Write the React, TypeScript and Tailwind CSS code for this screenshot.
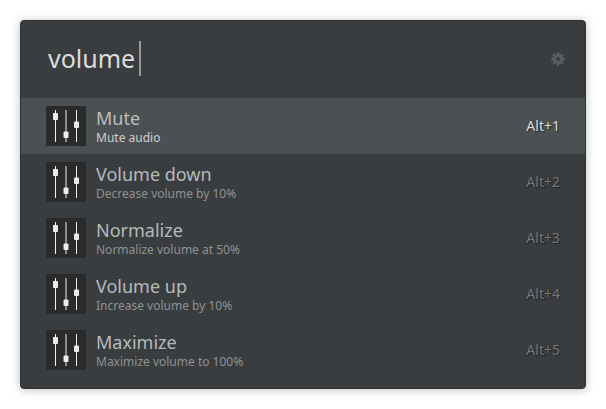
import { useState } from "react";

type Result = { title: string; detail: string };

const results: Result[] = [
  { title: "Mute", detail: "Mute audio" },
  { title: "Volume down", detail: "Decrease volume by 10%" },
  { title: "Normalize", detail: "Normalize volume at 50%" },
  { title: "Volume up", detail: "Increase volume by 10%" },
  { title: "Maximize", detail: "Maximize volume to 100%" },
];

function MixerIcon() {
  return (
    <svg viewBox="0 0 40 40" className="size-10 shrink-0" aria-hidden="true">
      <rect width="40" height="40" fill="#2b2b2b" />
      <rect x="9" y="4" width="1" height="32" fill="#ededed" />
      <rect x="19" y="4" width="2" height="32" fill="#8c8c8c" />
      <rect x="30" y="4" width="1" height="32" fill="#ededed" />
      <rect x="7" y="7" width="5" height="7" rx="1" fill="#ededed" />
      <rect x="17.5" y="25.5" width="5" height="6.5" rx="1" fill="#ededed" />
      <rect x="28" y="15.5" width="5" height="6.5" rx="1" fill="#ededed" />
    </svg>
  );
}

function GearIcon() {
  return (
    <svg viewBox="-7 -7 14 14" className="size-3.5" fill="#5c5f61" aria-hidden="true">
      {[0, 45, 90, 135].map((angle) => (
        <rect key={angle} x="-1.3" y="-6.8" width="2.6" height="13.6" rx="0.5" transform={`rotate(${angle})`} />
      ))}
      <circle r="5" />
      <circle r="2.1" fill="#3a3d3f" />
    </svg>
  );
}

export default function App() {
  const [query, setQuery] = useState("volume");
  const [selected, setSelected] = useState(0);

  return (
    <main className="min-h-screen bg-white p-5 font-['Noto_Sans',sans-serif]">
      <section className="overflow-hidden rounded border border-[#2f3233] bg-[#3a3d3f] pb-2.5 shadow-[0_1px_10px_rgba(0,0,0,0.25)]">
        <header className="flex h-[77px] items-center pr-5 pb-0.5 pl-[27px]">
          <input
            type="text"
            aria-label="Search"
            value={query}
            onChange={(e) => setQuery(e.target.value)}
            className="field-sizing-content h-9 bg-transparent text-[25px] text-[#dcdcdc] caret-transparent outline-none"
          />
          <span className="ml-1 h-[35px] w-0.5 bg-[#9a9a9a]" />
          <button type="button" aria-label="Preferences" className="ml-auto">
            <GearIcon />
          </button>
        </header>
        <ul>
          {results.map((result, index) => {
            const active = index === selected;
            return (
              <li key={result.title}>
                <button
                  type="button"
                  onClick={() => setSelected(index)}
                  className={`flex h-14 w-full items-center gap-2.5 px-[25px] text-left ${active ? "bg-[#4b5052]" : ""}`}
                >
                  <MixerIcon />
                  <span className="flex-1">
                    <span className={`block text-lg leading-6 ${active ? "text-[#bdbdbd]" : "text-[#b5b9ba]"}`}>
                      {result.title}
                    </span>
                    <span className={`block text-xs leading-4 ${active ? "text-[#cfcfcf]" : "text-[#8f9192]"}`}>
                      {result.detail}
                    </span>
                  </span>
                  <span
                    className={`text-sm [text-shadow:1px_1px_1px_rgba(0,0,0,0.5)] ${active ? "text-[#dcdcdc]" : "text-[#737678]"}`}
                  >
                    Alt+{index + 1}
                  </span>
                </button>
              </li>
            );
          })}
        </ul>
      </section>
    </main>
  );
}
